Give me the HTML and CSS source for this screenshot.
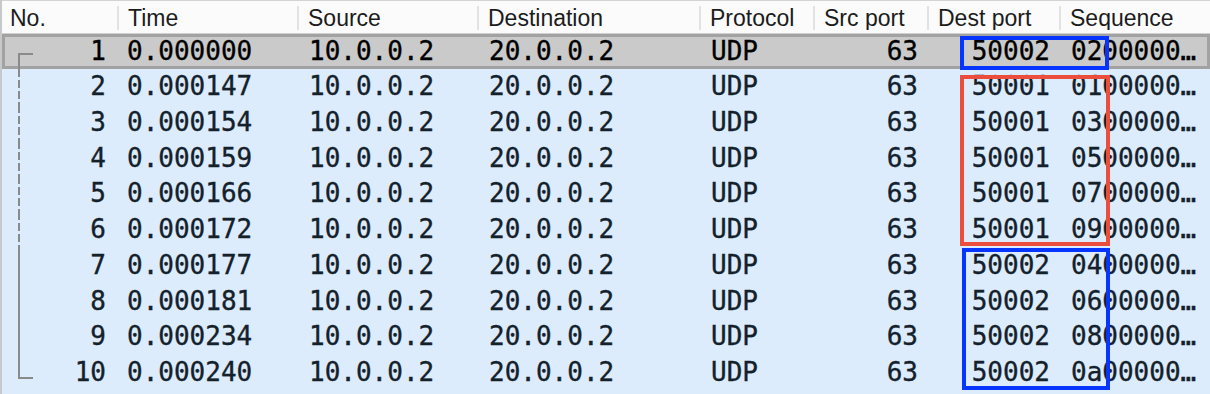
FILE: index.html
```html
<!DOCTYPE html>
<html lang="en">
<head>
    <meta charset="UTF-8">
    <title>Packet list</title>
    <link rel="stylesheet" href="styles.css">
</head>
<body>

    <div class="packets">
        <div class="head">
            <div class="hcell">No.</div>
            <div class="hcell">Time</div>
            <div class="hcell">Source</div>
            <div class="hcell">Destination</div>
            <div class="hcell">Protocol</div>
            <div class="hcell">Src port</div>
            <div class="hcell">Dest port</div>
            <div class="hcell">Sequence</div>
        </div>

        <div class="row selected">
            <div class="cell num tree-start">1</div>
            <div class="cell">0.000000</div>
            <div class="cell">10.0.0.2</div>
            <div class="cell">20.0.0.2</div>
            <div class="cell">UDP</div>
            <div class="cell num">63</div>
            <div class="cell num">50002</div>
            <div class="cell">0200000…</div>
        </div>
        <div class="row">
            <div class="cell num tree-dash">2</div>
            <div class="cell">0.000147</div>
            <div class="cell">10.0.0.2</div>
            <div class="cell">20.0.0.2</div>
            <div class="cell">UDP</div>
            <div class="cell num">63</div>
            <div class="cell num">50001</div>
            <div class="cell">0100000…</div>
        </div>
        <div class="row">
            <div class="cell num tree-dash">3</div>
            <div class="cell">0.000154</div>
            <div class="cell">10.0.0.2</div>
            <div class="cell">20.0.0.2</div>
            <div class="cell">UDP</div>
            <div class="cell num">63</div>
            <div class="cell num">50001</div>
            <div class="cell">0300000…</div>
        </div>
        <div class="row">
            <div class="cell num tree-dash">4</div>
            <div class="cell">0.000159</div>
            <div class="cell">10.0.0.2</div>
            <div class="cell">20.0.0.2</div>
            <div class="cell">UDP</div>
            <div class="cell num">63</div>
            <div class="cell num">50001</div>
            <div class="cell">0500000…</div>
        </div>
        <div class="row">
            <div class="cell num tree-dash">5</div>
            <div class="cell">0.000166</div>
            <div class="cell">10.0.0.2</div>
            <div class="cell">20.0.0.2</div>
            <div class="cell">UDP</div>
            <div class="cell num">63</div>
            <div class="cell num">50001</div>
            <div class="cell">0700000…</div>
        </div>
        <div class="row">
            <div class="cell num tree-dash">6</div>
            <div class="cell">0.000172</div>
            <div class="cell">10.0.0.2</div>
            <div class="cell">20.0.0.2</div>
            <div class="cell">UDP</div>
            <div class="cell num">63</div>
            <div class="cell num">50001</div>
            <div class="cell">0900000…</div>
        </div>
        <div class="row">
            <div class="cell num tree-line">7</div>
            <div class="cell">0.000177</div>
            <div class="cell">10.0.0.2</div>
            <div class="cell">20.0.0.2</div>
            <div class="cell">UDP</div>
            <div class="cell num">63</div>
            <div class="cell num">50002</div>
            <div class="cell">0400000…</div>
        </div>
        <div class="row">
            <div class="cell num tree-line">8</div>
            <div class="cell">0.000181</div>
            <div class="cell">10.0.0.2</div>
            <div class="cell">20.0.0.2</div>
            <div class="cell">UDP</div>
            <div class="cell num">63</div>
            <div class="cell num">50002</div>
            <div class="cell">0600000…</div>
        </div>
        <div class="row">
            <div class="cell num tree-line">9</div>
            <div class="cell">0.000234</div>
            <div class="cell">10.0.0.2</div>
            <div class="cell">20.0.0.2</div>
            <div class="cell">UDP</div>
            <div class="cell num">63</div>
            <div class="cell num">50002</div>
            <div class="cell">0800000…</div>
        </div>
        <div class="row">
            <div class="cell num tree-end">10</div>
            <div class="cell">0.000240</div>
            <div class="cell">10.0.0.2</div>
            <div class="cell">20.0.0.2</div>
            <div class="cell">UDP</div>
            <div class="cell num">63</div>
            <div class="cell num">50002</div>
            <div class="cell">0a00000…</div>
        </div>

        <!-- annotation boxes drawn over the list -->
        <div class="mark mark-blue mark-top"></div>
        <div class="mark mark-red"></div>
        <div class="mark mark-blue mark-bottom"></div>
    </div>

</body>
</html>
```

FILE: styles.css
```css
body {
    margin: 0;
    padding: 0;
    background-color: #dcecfd;
}

.packets {
    position: relative;
    width: 1210px;
    height: 394px;
    overflow: hidden;
    background-color: #dcecfd;
    border-left: 2px solid #c6c9cc;
    box-sizing: border-box;
}

/* header */
.head {
    display: grid;
    grid-template-columns: 115px 180px 180px 222px 114px 114px 132px 1fr;
    align-items: center;
    height: 34px;
    background-color: #fbfbfb;
    border-top: 1px solid #d4d4d4;
    border-bottom: 1px solid #d0d0d0;
    box-sizing: border-box;
    margin-left: -2px;
    padding-left: 2px;
    padding-top: 2px;
    font-family: "Liberation Sans", Arial, sans-serif;
    font-size: 23px;
    color: #1c1c1c;
}

.hcell {
    height: 24px;
    line-height: 24px;
    padding: 0 9px;
    border-left: 2px solid #e2e2e2;
    white-space: nowrap;
    overflow: hidden;
}

.hcell:first-child {
    border-left: none;
    padding-left: 8px;
}

/* rows */
.row {
    display: grid;
    grid-template-columns: 115px 182px 180px 222px 114px 114px 132px 1fr;
    height: 35.75px;
    line-height: 35.75px;
    font-family: "DejaVu Sans Mono", "Liberation Mono", monospace;
    font-size: 26px;
    color: #14212b;
    -webkit-text-stroke: 0.35px #14212b;
}

.row.selected {
    height: 35px;
    line-height: 35px;
    background-color: #cacaca;
    box-shadow: inset 0 0 0 3px #a2a2a2;
    color: #000;
    -webkit-text-stroke: 0.35px #000;
}

.cell {
    position: relative;
    padding: 0 10px;
    white-space: nowrap;
    overflow: hidden;
}

.cell.num {
    text-align: right;
    padding-right: 11px;
}

/* conversation tree in the No. column */
.tree-start::before,
.tree-dash::before,
.tree-line::before,
.tree-end::before {
    content: "";
    position: absolute;
    left: 16px;
    width: 2px;
}

.tree-start::before {
    top: 19px;
    bottom: 0;
    width: 15px;
    border-top: 2px solid #8a8a8a;
    border-left: 2px solid #8a8a8a;
    box-sizing: border-box;
}

.tree-dash::before {
    top: 0;
    bottom: 0;
    background: repeating-linear-gradient(to bottom, #8a8a8a 0 8px, transparent 8px 11px);
}

.tree-line::before {
    top: 0;
    bottom: 0;
    background-color: #8a8a8a;
}

.tree-end::before {
    top: 0;
    height: 24px;
    width: 15px;
    border-bottom: 2px solid #8a8a8a;
    border-left: 2px solid #8a8a8a;
    box-sizing: border-box;
}

/* hand drawn highlight boxes */
.mark {
    position: absolute;
    border: 4px solid;
    box-sizing: border-box;
}

.mark-blue {
    border-color: #0535ff;
}

.mark-red {
    border-color: #ec4e3d;
    left: 958px;
    top: 75px;
    width: 150px;
    height: 171px;
}

.mark-top {
    left: 958px;
    top: 36px;
    width: 149px;
    height: 34px;
}

.mark-bottom {
    left: 960px;
    top: 248px;
    width: 148px;
    height: 142px;
}
```
